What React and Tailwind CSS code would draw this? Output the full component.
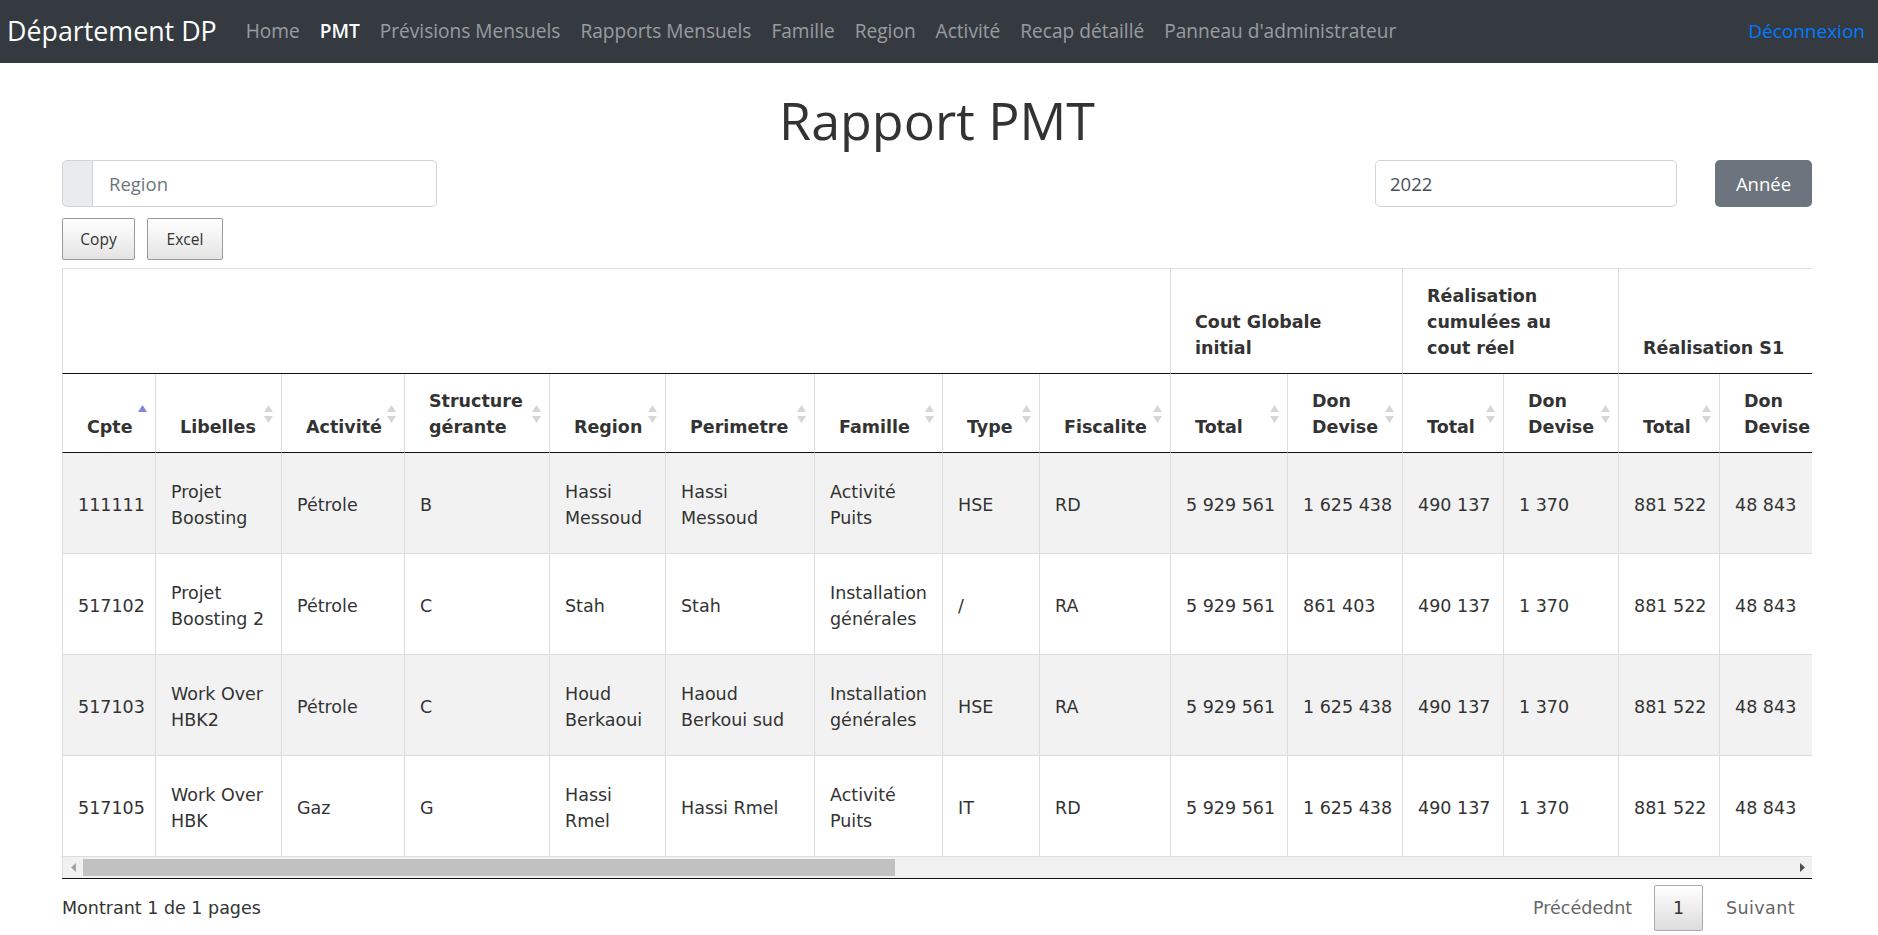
import React from "react";

const navLinks = [
  "Home",
  "PMT",
  "Prévisions Mensuels",
  "Rapports Mensuels",
  "Famille",
  "Region",
  "Activité",
  "Recap détaillé",
  "Panneau d'administrateur",
];

const groups = [
  "Cout Globale initial",
  "Réalisation cumulées au cout réel",
  "Réalisation S1",
  "Réalisation S2",
  "Réalisation S3",
  "Réalisation S4",
];

const baseCols = [
  "Cpte",
  "Libelles",
  "Activité",
  "Structure gérante",
  "Region",
  "Perimetre",
  "Famille",
  "Type",
  "Fiscalite",
];

const rows = [
  ["111111", "Projet Boosting", "Pétrole", "B", "Hassi Messoud", "Hassi Messoud", "Activité Puits", "HSE", "RD", "5 929 561", "1 625 438", "490 137", "1 370", "881 522", "48 843", "612 400", "21 300", "410 220", "9 870", "288 615", "4 112"],
  ["517102", "Projet Boosting 2", "Pétrole", "C", "Stah", "Stah", "Installation générales", "/", "RA", "5 929 561", "861 403", "490 137", "1 370", "881 522", "48 843", "612 400", "21 300", "410 220", "9 870", "288 615", "4 112"],
  ["517103", "Work Over HBK2", "Pétrole", "C", "Houd Berkaoui", "Haoud Berkoui sud", "Installation générales", "HSE", "RA", "5 929 561", "1 625 438", "490 137", "1 370", "881 522", "48 843", "612 400", "21 300", "410 220", "9 870", "288 615", "4 112"],
  ["517105", "Work Over HBK", "Gaz", "G", "Hassi Rmel", "Hassi Rmel", "Activité Puits", "IT", "RD", "5 929 561", "1 625 438", "490 137", "1 370", "881 522", "48 843", "612 400", "21 300", "410 220", "9 870", "288 615", "4 112"],
];

function SortIcon({ asc }) {
  return (
    <svg
      width="9"
      height="18"
      viewBox="0 0 9 18"
      className="absolute right-[8px] top-[31px]"
    >
      {asc ? (
        <polygon points="0,7 4.5,0 9,7" fill="#8585d6" />
      ) : (
        <>
          <polygon points="0,7 4.5,0 9,7" fill="#d6d6d6" />
          <polygon points="0,11 9,11 4.5,18" fill="#d6d6d6" />
        </>
      )}
    </svg>
  );
}

export default function App() {
  const subCols = groups.flatMap(() => ["Total", "Don Devise"]);

  return (
    <div className="min-h-screen bg-white text-[#333]">
      {/* navbar */}
      <nav className="flex h-[63px] items-center bg-[#343a40] pl-[7px] pr-[13px] font-['Open_Sans',sans-serif]">
        <span className="mr-[19px] text-[26.8px] text-white">Département DP</span>
        <div className="flex items-center">
          {navLinks.map((l) => (
            <a
              key={l}
              className={
                l === "PMT"
                  ? "px-[10px] text-[19.1px] font-semibold text-white"
                  : "px-[10px] text-[19.1px] text-white/50"
              }
            >
              {l}
            </a>
          ))}
        </div>
        <a className="ml-auto text-[19px] text-[#007bff]">Déconnexion</a>
      </nav>

      <div className="ml-[62px] w-[1750px]">
        <h1 className="mt-[26px] text-center font-['Open_Sans',sans-serif] text-[52px] leading-[1.2] font-normal text-[#333]">
          Rapport PMT
        </h1>

        {/* filters */}
        <div className="mt-[9px] flex items-center justify-between font-['Open_Sans',sans-serif] text-[18.5px]">
          <div className="flex h-[47px] w-[375px]">
            <span className="w-[31px] rounded-l-[5px] border border-[#ced4da] bg-[#e9ecef]" />
            <input
              placeholder="Region"
              className="flex-1 rounded-r-[5px] border border-l-0 border-[#ced4da] pl-[16px] text-[#495057] outline-none placeholder:text-[#6c757d]"
            />
          </div>
          <div className="flex items-center">
            <input
              readOnly
              value="2022"
              className="h-[47px] w-[302px] rounded-[5px] border border-[#ced4da] pl-[14px] text-[#495057] outline-none"
            />
            <button className="ml-[38px] h-[47px] w-[97px] rounded-[5px] bg-[#6c757d] text-white">
              Année
            </button>
          </div>
        </div>

        <div className="mt-[11px] flex gap-[12px] font-['Open_Sans',sans-serif] text-[15.5px]">
          <button className="h-[42px] w-[73px] rounded-[2px] border border-[#999] bg-linear-to-b from-white to-[#e4e4e4] text-[#333]">
            Copy
          </button>
          <button className="h-[42px] w-[76px] rounded-[2px] border border-[#999] bg-linear-to-b from-white to-[#e4e4e4] text-[#333]">
            Excel
          </button>
        </div>

        {/* table */}
        <div className="mt-[8px] overflow-hidden font-['DejaVu_Sans',sans-serif] text-[17.5px] leading-[26px]">
          <table className="w-[2421px] table-fixed border-separate border-spacing-0">
            <colgroup>
              <col className="w-[94px]" />
              <col className="w-[126px]" />
              <col className="w-[123px]" />
              <col className="w-[145px]" />
              <col className="w-[116px]" />
              <col className="w-[149px]" />
              <col className="w-[128px]" />
              <col className="w-[97px]" />
              <col className="w-[131px]" />
              <col className="w-[117px]" />
              <col className="w-[115px]" />
              <col className="w-[101px]" />
              <col className="w-[115px]" />
              <col className="w-[101px]" />
              <col className="w-[115px]" />
              <col className="w-[101px]" />
              <col className="w-[115px]" />
              <col className="w-[101px]" />
              <col className="w-[115px]" />
              <col className="w-[101px]" />
              <col className="w-[115px]" />
            </colgroup>
            <thead>
              <tr>
                <th
                  colSpan={9}
                  className="border-t border-r border-b border-l border-[#ddd] border-b-[#111]"
                />
                {groups.map((g) => (
                  <th
                    key={g}
                    colSpan={2}
                    className="border-t border-r border-b border-[#ddd] border-b-[#111] pt-[14px] pr-[40px] pb-[12px] pl-6 text-left align-bottom font-bold"
                  >
                    {g}
                  </th>
                ))}
              </tr>
              <tr>
                {[...baseCols, ...subCols].map((c, i) => (
                  <th
                    key={i}
                    className={
                      (i === 0 ? "border-l " : "") +
                      "relative border-r border-b border-[#ddd] border-b-[#111] pt-[14px] pr-[22px] pb-[12px] pl-6 text-left align-bottom font-bold"
                    }
                  >
                    {c}
                    <SortIcon asc={i === 0} />
                  </th>
                ))}
              </tr>
            </thead>
            <tbody>
              {rows.map((r, ri) => (
                <tr key={ri} className={ri % 2 === 0 ? "bg-[#f2f2f2]" : "bg-white"}>
                  {r.map((v, ci) => (
                    <td
                      key={ci}
                      className={
                        (ci === 0 ? "border-l " : "") +
                        (ci >= 9 || ci === 0 ? "whitespace-nowrap " : "") +
                        "border-r border-b border-[#ddd] pt-[26px] pb-[22px] pr-[10px] pl-[15px] align-middle"
                      }
                    >
                      {v}
                    </td>
                  ))}
                </tr>
              ))}
            </tbody>
          </table>

          {/* horizontal scrollbar */}
          <div className="flex h-[21px] items-center border-l border-[#ddd] bg-[#f1f1f1]">
            <span className="flex w-[20px] justify-center">
              <svg width="5" height="9" viewBox="0 0 5 9">
                <polygon points="5,0 0,4.5 5,9" fill="#a3a3a3" />
              </svg>
            </span>
            <span className="h-[17px] w-[812px] bg-[#c1c1c1]" />
            <span className="ml-auto flex w-[20px] justify-center">
              <svg width="5" height="9" viewBox="0 0 5 9">
                <polygon points="0,0 5,4.5 0,9" fill="#505050" />
              </svg>
            </span>
          </div>
          <div className="border-b border-[#111]" />
        </div>

        {/* footer */}
        <div className="mt-[5px] flex h-[48px] items-center justify-between font-['DejaVu_Sans',sans-serif] text-[17.5px]">
          <span className="text-[#333]">Montrant 1 de 1 pages</span>
          <div className="flex items-center text-[#666]">
            <span className="px-[18px]">Précédednt</span>
            <span className="ml-[4px] flex h-[46px] w-[49px] items-center justify-center rounded-[2px] border border-[#aaa] bg-linear-to-b from-white to-[#dcdcdc] text-[#333]">
              1
            </span>
            <span className="ml-[6px] px-[17px] tracking-[0.4px]">Suivant</span>
          </div>
        </div>
      </div>
    </div>
  );
}
